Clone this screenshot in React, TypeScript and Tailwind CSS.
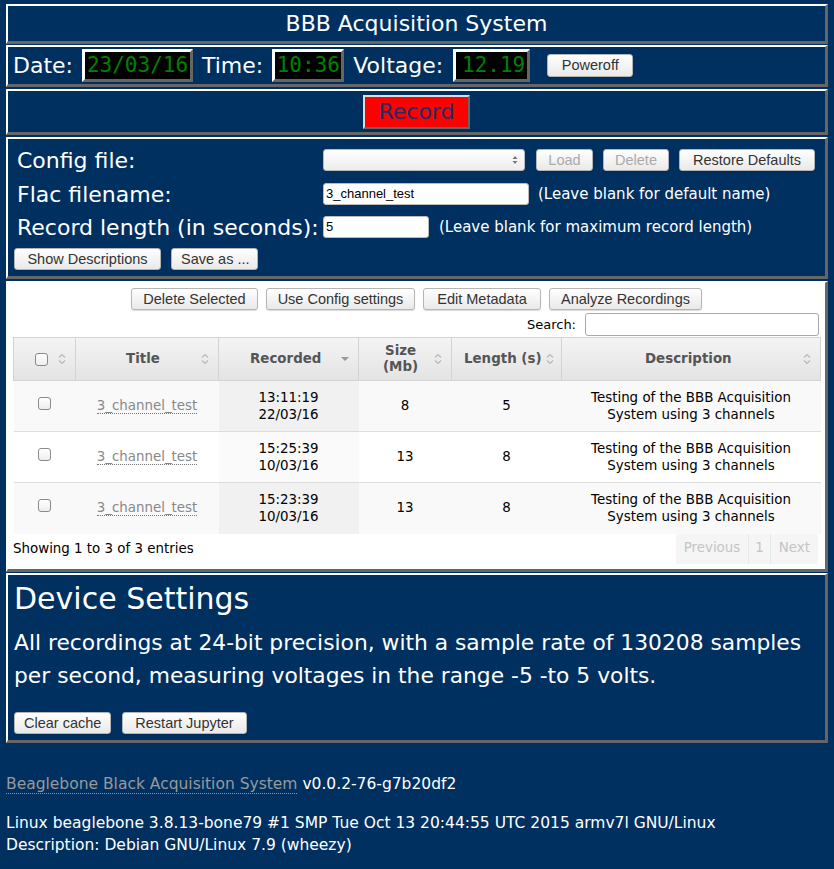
import React from "react";

const panel =
  "border-t-2 border-l-2 border-b-[3px] border-r-[3px] border-t-white border-l-white border-b-[#666] border-r-[#666]";

const btn =
  "h-[22px] px-[9px] rounded-[3px] border border-[#b5b5b5] bg-gradient-to-b from-white to-[#e9e9e9] text-[14.5px] leading-none text-[#333] shadow-[0_1px_1px_rgba(0,0,0,0.15)] whitespace-nowrap";

const display =
  "h-[33px] flex items-center justify-center bg-black border-[3px] border-t-white border-l-white border-b-[#666] border-r-[#666] text-[21px] text-[#008000] [font-family:'DejaVu_Sans_Mono',monospace]";

function SortIcon() {
  return (
    <svg width="8" height="12" viewBox="0 0 8 12" className="shrink-0">
      <path d="M1 4.5 L4 1.5 L7 4.5" fill="none" stroke="#b8b8b8" strokeWidth="1.2" />
      <path d="M1 7.5 L4 10.5 L7 7.5" fill="none" stroke="#b8b8b8" strokeWidth="1.2" />
    </svg>
  );
}

function SortDown() {
  return (
    <svg width="8" height="6" viewBox="0 0 8 6" className="shrink-0">
      <path d="M0 1 L8 1 L4 5 Z" fill="#999" />
    </svg>
  );
}

const rows = [
  { time: "13:11:19", date: "22/03/16", size: "8", length: "5" },
  { time: "15:25:39", date: "10/03/16", size: "13", length: "8" },
  { time: "15:23:39", date: "10/03/16", size: "13", length: "8" },
];

function Checkbox() {
  return (
    <span className="inline-block w-[13px] h-[13px] rounded-[3px] border border-[#8a8a8a] bg-gradient-to-b from-white to-[#eee]" />
  );
}

export default function App() {
  return (
    <div className="min-h-[869px] bg-[#003060] pt-[4px] px-[6px] text-white [font-family:'DejaVu_Sans',Verdana,sans-serif]">
      {/* title */}
      <div className={`${panel} h-[40px] flex items-center justify-center text-[22px]`}>
        BBB Acquisition System
      </div>

      {/* date / time / voltage */}
      <div className={`${panel} mt-[1px] h-[42px] flex items-center pl-[5px] text-[22px]`}>
        <span>Date:</span>
        <div className={`${display} w-[111px] ml-[9px]`}>23/03/16</div>
        <span className="ml-[9px]">Time:</span>
        <div className={`${display} w-[72px] ml-[9px]`}>10:36</div>
        <span className="ml-[9px]">Voltage:</span>
        <div className={`${display} w-[77px] ml-[10px] justify-end pr-[2px]`}>12.19</div>
        <button className={`${btn} ml-[17px] h-[23px] w-[86px] [font-family:'Liberation_Sans',Arial,sans-serif]`}>Poweroff</button>
      </div>

      {/* record */}
      <div className={`${panel} mt-[2px] h-[46px] flex items-center justify-center`}>
        <button className="w-[107px] h-[34px] bg-[#ff0000] border-2 border-t-[#ddd] border-l-[#ddd] border-b-[#666] border-r-[#666] text-[22px] text-[#1d2f66] leading-none">
          Record
        </button>
      </div>

      {/* config */}
      <div className={`${panel} mt-[2px] h-[142px] pt-[10px] pl-[9px] text-[22px]`}>
        <div className="flex items-center h-[22px]">
          <span className="w-[306px]">Config file:</span>
          <div className="w-[202px] h-[22px] rounded-[3px] border border-[#bbb] bg-gradient-to-b from-white to-[#ececec] flex items-center justify-end pr-[6px]">
            <svg width="6" height="10" viewBox="0 0 6 10">
              <path d="M0.5 4 L3 1 L5.5 4 Z M0.5 6 L3 9 L5.5 6 Z" fill="#777" />
            </svg>
          </div>
          <div className="flex gap-[10px] ml-[11px] [font-family:'Liberation_Sans',Arial,sans-serif]">
            <button className={`${btn} w-[57px] text-[#aaa]`}>Load</button>
            <button className={`${btn} w-[66px] text-[#aaa]`}>Delete</button>
            <button className={`${btn} w-[136px]`}>Restore Defaults</button>
          </div>
        </div>
        <div className="flex items-center h-[22px] mt-[12px]">
          <span className="w-[306px]">Flac filename:</span>
          <div className="w-[206px] h-[22px] rounded-[3px] border border-[#bbb] bg-white text-[13px] text-black flex items-center pl-[2px] [font-family:'Liberation_Sans',Arial,sans-serif]">
            3_channel_test
          </div>
          <span className="ml-[9px] text-[15px]">(Leave blank for default name)</span>
        </div>
        <div className="flex items-center h-[22px] mt-[11px]">
          <span className="w-[306px]">Record length (in seconds):</span>
          <div className="w-[106px] h-[22px] rounded-[3px] border border-[#bbb] bg-white text-[13px] text-black flex items-center pl-[2px] [font-family:'Liberation_Sans',Arial,sans-serif]">
            5
          </div>
          <span className="ml-[10px] text-[15px]">(Leave blank for maximum record length)</span>
        </div>
        <div className="flex gap-[10px] mt-[10px] -ml-[3px] [font-family:'Liberation_Sans',Arial,sans-serif]">
          <button className={`${btn} w-[147px]`}>Show Descriptions</button>
          <button className={`${btn} w-[87px]`}>Save as ...</button>
        </div>
      </div>

      {/* recordings */}
      <div className={`${panel} mt-[2px] h-[291px] bg-white text-black px-[5px] pt-[5px]`}>
        <div className="flex justify-center gap-[8px] [font-family:'Liberation_Sans',Arial,sans-serif]">
          <button className={`${btn} w-[127px]`}>Delete Selected</button>
          <button className={`${btn} w-[149px]`}>Use Config settings</button>
          <button className={`${btn} w-[118px]`}>Edit Metadata</button>
          <button className={`${btn} w-[153px]`}>Analyze Recordings</button>
        </div>
        <div className="flex justify-end items-center mt-[3px] pr-[1px] h-[23px]">
          <span className="text-[13px] mr-[9px]">Search:</span>
          <div className="w-[234px] h-[23px] rounded-[3px] border border-[#aaa]" />
        </div>
        <table className="table-fixed w-[808px] border-collapse text-[13.4px] mt-[1px]">
          <thead>
            <tr className="h-[43px] bg-gradient-to-b from-[#f4f4f4] to-[#e3e3e3] text-[#555] font-bold">
              <th className="w-[62px] border border-[#d3d3d3]">
                <div className="flex items-center justify-end gap-[10px] pr-[9px]">
                  <Checkbox />
                  <SortIcon />
                </div>
              </th>
              <th className="w-[143px] border border-[#d3d3d3]">
                <div className="flex items-center justify-between pl-[50px] pr-[9px]">
                  <span>Title</span>
                  <SortIcon />
                </div>
              </th>
              <th className="w-[140px] border border-[#d3d3d3]">
                <div className="flex items-center justify-between pl-[31px] pr-[9px]">
                  <span>Recorded</span>
                  <SortDown />
                </div>
              </th>
              <th className="w-[93px] border border-[#d3d3d3]">
                <div className="flex items-center justify-between pl-[24px] pr-[9px] leading-[16px]">
                  <span>
                    Size
                    <br />
                    (Mb)
                  </span>
                  <SortIcon />
                </div>
              </th>
              <th className="w-[110px] border border-[#d3d3d3]">
                <div className="flex items-center gap-[4px] pl-[12px]">
                  <span>Length (s)</span>
                  <SortIcon />
                </div>
              </th>
              <th className="border border-[#d3d3d3]">
                <div className="flex items-center justify-between pl-[83px] pr-[9px]">
                  <span>Description</span>
                  <SortIcon />
                </div>
              </th>
            </tr>
          </thead>
          <tbody>
            {rows.map((r, i) => (
              <tr
                key={i}
                className={`h-[51px] text-center ${i < 2 ? "border-b border-[#ddd]" : ""} ${i % 2 === 0 ? "bg-[#f9f9f9]" : "bg-white"}`}
              >
                <td>
                  <Checkbox />
                </td>
                <td>
                  <span className="text-[#888] border-b border-dotted border-[#777]">3_channel_test</span>
                </td>
                <td className={`leading-[17px] ${i % 2 === 0 ? "bg-[#f1f1f1]" : "bg-[#fafafa]"}`}>
                  {r.time}
                  <br />
                  {r.date}
                </td>
                <td>{r.size}</td>
                <td>{r.length}</td>
                <td className="leading-[17px]">
                  Testing of the BBB Acquisition
                  <br />
                  System using 3 channels
                </td>
              </tr>
            ))}
          </tbody>
        </table>
        <div className="flex items-center justify-between w-[808px]">
          <span className="text-[13.4px] pt-[1px]">Showing 1 to 3 of 3 entries</span>
          <div className="flex h-[30px] items-center rounded-[3px] bg-[#f5f5f5] text-[13.4px] text-[#c4c4c4] mr-[3px]">
            <span className="px-[8px] border-r border-[#e8e8e8] h-full flex items-center">Previous</span>
            <span className="px-[6px] border-r border-[#e8e8e8] h-full flex items-center">1</span>
            <span className="px-[8px] h-full flex items-center">Next</span>
          </div>
        </div>
      </div>

      {/* device settings */}
      <div className={`${panel} mt-[1px] h-[170px] px-[6px] pt-[6px]`}>
        <div className="text-[30px] leading-[36px]">Device Settings</div>
        <p className="text-[21.8px] leading-[33px] mt-[9px]">
          All recordings at 24-bit precision, with a sample rate of 130208 samples per second, measuring voltages in the range -5 -to 5 volts.
        </p>
        <div className="flex gap-[11px] mt-[20px] [font-family:'Liberation_Sans',Arial,sans-serif]">
          <button className={`${btn} w-[97px]`}>Clear cache</button>
          <button className={`${btn} w-[125px]`}>Restart Jupyter</button>
        </div>
      </div>

      {/* footer */}
      <div className="text-[15.5px] pt-[30px] pb-[20px]">
        <div className="leading-[22px]">
          <span className="text-[#999] border-b border-dotted border-[#999]">Beaglebone Black Acquisition System</span>{" "}
          v0.0.2-76-g7b20df2
        </div>
        <div className="leading-[22px] mt-[17px]">
          Linux beaglebone 3.8.13-bone79 #1 SMP Tue Oct 13 20:44:55 UTC 2015 armv7l GNU/Linux
        </div>
        <div className="leading-[22px]">Description: Debian GNU/Linux 7.9 (wheezy)</div>
      </div>
    </div>
  );
}
